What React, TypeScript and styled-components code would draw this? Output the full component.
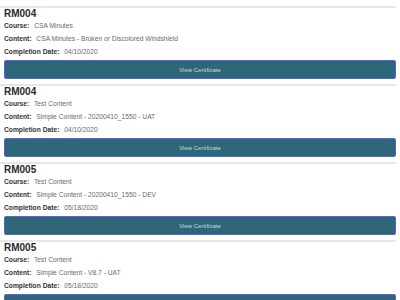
import React from 'react'
import styled, { createGlobalStyle } from 'styled-components'

const GlobalStyle = createGlobalStyle`
  body {
    margin: 0;
    background: #ffffff;
    font-family: "Liberation Sans", Arial, sans-serif;
  }
`

type Record = {
  code: string
  course: string
  content: string
  date: string
}

const records: Record[] = [
  { code: 'RM004', course: 'CSA Minutes', content: 'CSA Minutes - Broken or Discolored Windshield', date: '04/10/2020' },
  { code: 'RM004', course: 'Test Content', content: 'Simple Content - 20200410_1550 - UAT', date: '04/10/2020' },
  { code: 'RM005', course: 'Test Content', content: 'Simple Content - 20200410_1550 - DEV', date: '05/18/2020' },
  { code: 'RM005', course: 'Test Content', content: 'Simple Content - V8.7 - UAT', date: '05/18/2020' },
]

const List = styled.div`
  padding: 6px 4px 0 0;
  height: 300px;
  overflow: hidden;
  box-sizing: border-box;
`

const Card = styled.section`
  border-top: 2px solid #e6e6e6;
  padding: 0 0 0 4px;
  margin-bottom: 5px;
`

const Title = styled.h2`
  margin: 0;
  font-size: 10px;
  line-height: 11px;
  font-weight: 700;
  color: #2a2a2a;
`

const InfoRow = styled.div`
  font-size: 6.7px;
  line-height: 13px;
  color: #6a6a6a;
  white-space: nowrap;
`

const Label = styled.span`
  font-weight: 700;
  color: #333333;
  margin-right: 3px;
`

const CertButton = styled.button`
  display: block;
  width: 100%;
  height: 19px;
  margin-top: 2px;
  padding: 0;
  background: #2e6878;
  border: 1px solid #5a63d4;
  border-radius: 2px;
  color: #c9d8dd;
  font-family: "Liberation Sans", Arial, sans-serif;
  font-size: 6px;
  cursor: pointer;
`

export default function App() {
  return (
    <>
      <GlobalStyle />
      <List>
        {records.map((r, i) => (
          <Card key={i}>
            <Title>{r.code}</Title>
            <InfoRow>
              <Label>Course:</Label> {r.course}
            </InfoRow>
            <InfoRow>
              <Label>Content:</Label> {r.content}
            </InfoRow>
            <InfoRow>
              <Label>Completion Date:</Label> {r.date}
            </InfoRow>
            <CertButton>View Certificate</CertButton>
          </Card>
        ))}
      </List>
    </>
  )
}
